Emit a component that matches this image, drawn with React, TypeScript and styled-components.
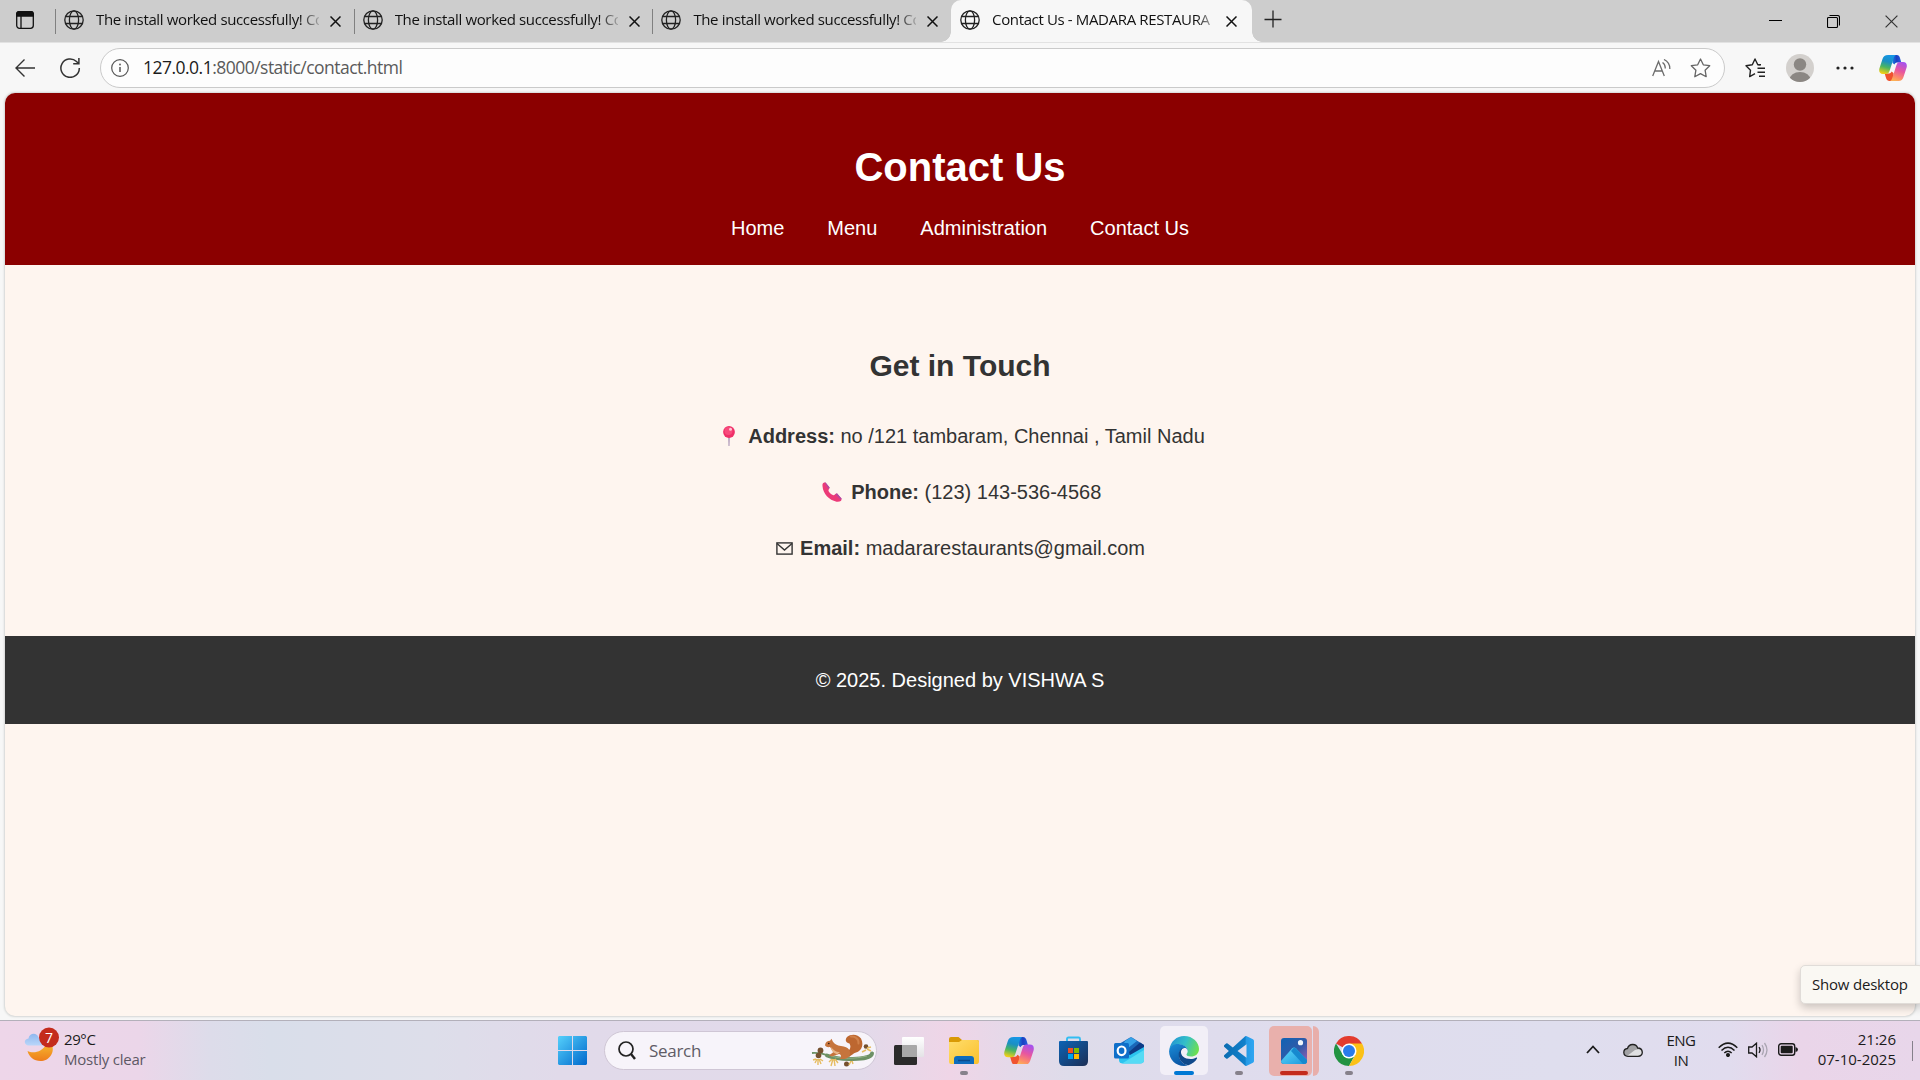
import React from 'react';
import styled, { createGlobalStyle } from 'styled-components';

const Global = createGlobalStyle`
  * { box-sizing: border-box; }
  html, body { margin: 0; padding: 0; overflow: hidden; }
  svg { display: block; flex: none; }
`;

const ui = `"Open Sans", "Noto Sans", sans-serif`;

const Screen = styled.div`
  width: 1920px;
  height: 1080px;
  display: flex;
  flex-direction: column;
  background: #f7f7f7;
  font-family: ${ui};
  color: #1b1b1b;
  overflow: hidden;
`;

/* Tab strip */
const TabStrip = styled.div`
  height: 42px;
  display: flex;
  background: #cdcdcd;
  flex: none;
`;
const Workspaces = styled.div`
  width: 55px;
  padding: 11px 0 0 16px;
`;
const Tab = styled.div<{ $active?: boolean }>`
  position: relative;
  width: ${p => (p.$active ? 301 : 298.7)}px;
  height: 42px;
  display: flex;
  align-items: center;
  padding: 0 12px 2px 9px;
  border-radius: ${p => (p.$active ? '10px 10px 0 0' : '0')};
  background: ${p => (p.$active ? '#f7f7f7' : 'transparent')};
  &::before, &::after {
    content: '';
    position: absolute;
    display: ${p => (p.$active ? 'block' : 'none')};
    bottom: 0;
    width: 10px;
    height: 10px;
  }
  &::before { left: -10px; background: radial-gradient(circle at 0 0, transparent 9.5px, #f7f7f7 10px); }
  &::after { right: -10px; background: radial-gradient(circle at 100% 0, transparent 9.5px, #f7f7f7 10px); }
`;
const PlainTab = styled(Tab)`
  &::before {
    display: block;
    left: 0;
    top: 9px;
    width: 1px;
    height: 25px;
    background: #808080;
  }
`;
const TabTitle = styled.div`
  margin: 0 0 2px 12px;
  width: 223px;
  height: 22px;
  line-height: 22px;
  font-size: 15px;
  letter-spacing: -0.36px;
  color: #111;
  white-space: nowrap;
  mask-image: linear-gradient(90deg, #000 204px, transparent 228px);
`;
const CloseSlot = styled.div`
  margin: 3px 0 0 11px;
`;
const NewTab = styled.div`
  padding: 10px 0 0 12px;
  flex: 1;
`;
const WindowControls = styled.div`
  display: flex;
  & > div {
    width: 58px;
    padding-top: 1px;
    display: flex;
    align-items: center;
    justify-content: center;
  }
`;

/* Toolbar */
const Toolbar = styled.div`
  height: 51px;
  flex: none;
  display: flex;
  align-items: center;
  padding: 0 13px 0 15px;
  border-top: 1px solid #e2e2e2;
`;
const RefreshSlot = styled.div`
  margin: 0 19px 0 25px;
`;
const AddressBar = styled.div`
  width: 1625px;
  height: 40px;
  border: 1px solid #cacaca;
  border-radius: 20px;
  background: #fdfdfd;
  display: flex;
  align-items: center;
  padding: 0 13px 0 10px;
`;
const Url = styled.div`
  flex: 1;
  margin: 0 0 2px 14px;
  font-size: 17.5px;
  letter-spacing: -0.52px;
  line-height: 24px;
  color: #5a5a5a;
  b { font-weight: 400; color: #1b1b1b; }
`;
const StarSlot = styled.div`
  margin-left: 19px;
`;
const ToolbarEnd = styled.div`
  flex: 1;
  display: flex;
  align-items: center;
  padding-left: 20px;
`;
const AvatarSlot = styled.div`
  margin: 0 22px 0 20px;
`;
const CopilotSlot = styled.div`
  margin-left: auto;
`;

/* Web page */
const PageFrame = styled.div`
  height: 923px;
  margin: 0 5px;
  flex: none;
  border-radius: 10px;
  background: #fef5ef;
  overflow: hidden;
  box-shadow: 0 0 2px 1px #d4d6d5;
  font-family: "Liberation Sans", Arial, sans-serif;
  font-size: 20px;
  line-height: 23px;
  text-align: center;
  color: #333;
`;
const Header = styled.header`
  height: 172px;
  padding-top: 51px;
  background: #8b0000;
  color: #fff;
`;
const Title = styled.h1`
  margin: 0 0 27px;
  font-size: 40px;
  line-height: 46px;
`;
const Nav = styled.nav`
  display: flex;
  justify-content: center;
  gap: 43px;
`;
const Main = styled.main`
  height: 371px;
  padding-top: 83px;
`;
const SubTitle = styled.h2`
  margin: 0 0 42px;
  font-size: 30px;
  line-height: 35px;
`;
const Line = styled.p`
  margin: 0 0 33px;
  display: flex;
  justify-content: center;
  white-space: pre;
`;
const Emoji = styled.span<{ $w: number; $up?: number }>`
  width: ${p => p.$w}px;
  margin-right: 5.5px;
  padding-bottom: ${p => p.$up || 0}px;
  display: flex;
  align-items: center;
  justify-content: center;
`;
const Footer = styled.footer`
  height: 88px;
  display: flex;
  align-items: center;
  justify-content: center;
  background: #333;
  color: #fff;
`;

/* Taskbar */
const Taskbar = styled.div`
  margin-top: 4px;
  height: 60px;
  flex: none;
  display: grid;
  grid-template-columns: 545px 832px 1fr;
  border-top: 1px solid #b3b0ba;
  background: linear-gradient(90deg, #eed6e9 0, #ebd6e9 140px, #dddcea 210px, #d9deea 270px, #dddeea 430px, #e1daea 560px, #e2daea 860px, #efd5e7 950px, #e5d9e9 1010px, #dedcea 1070px, #dfdced 1200px, #dfdeee 1560px, #e1dcee 1730px, #ead5e9 1800px, #e8d6ea 1920px);
`;
const Weather = styled.div`
  display: flex;
  padding: 6px 0 0 24px;
`;
const WeatherText = styled.div`
  margin-left: 4px;
  padding-top: 2px;
  font-size: 15px;
  line-height: 20px;
  letter-spacing: -0.4px;
  span { display: block; color: #5d5864; letter-spacing: -0.22px; }
`;
const Apps = styled.div`
  display: flex;
`;
const AppSlot = styled.div`
  position: relative;
  width: 55px;
  height: 59px;
  display: flex;
  align-items: center;
  justify-content: center;
`;
const AppTile = styled.div`
  width: 48px;
  height: 49px;
  border-radius: 5px;
  display: flex;
  align-items: center;
  justify-content: center;
  background: #f2eff7;
`;
const StackedTile = styled.div`
  width: 43px;
  height: 50px;
  padding-left: 12px;
  border-radius: 5px;
  display: flex;
  align-items: center;
  background: #e9b0ac;
`;
const StackEdge = styled.div`
  width: 6px;
  height: 50px;
  margin-left: 1px;
  border-radius: 0 6px 6px 0;
  background: #e8aeaa;
`;
const Indicator = styled.div<{ $w: number; $c: string }>`
  position: absolute;
  bottom: 5px;
  left: calc(50% - ${p => p.$w / 2}px);
  width: ${p => p.$w}px;
  height: 4px;
  border-radius: 2px;
  background: ${p => p.$c};
`;
const Search = styled.div`
  width: 273px;
  height: 39px;
  margin: 10px 4px 0;
  padding: 0 1px 0 13px;
  display: flex;
  align-items: center;
  border-radius: 20px;
  background: #f7f4fa;
  border: 1px solid #cfc6d5;
  font-size: 17px;
  color: #605c66;
  span { flex: 1; margin-left: 13px; letter-spacing: -0.3px; }
`;
const Tray = styled.div`
  display: flex;
  justify-content: flex-end;
  align-items: center;
  padding-right: 7px;
  font-size: 15px;
  line-height: 20px;
  letter-spacing: -0.5px;
`;
const TrayItem = styled.div<{ $w: number }>`
  width: ${p => p.$w}px;
  display: flex;
  justify-content: center;
  text-align: center;
  padding-bottom: 2px;
`;
const Clock = styled.div`
  width: 89px;
  text-align: right;
  padding-bottom: 3px;
  letter-spacing: 0;
`;
const DesktopSliver = styled.div`
  width: 1px;
  height: 20px;
  margin-left: 16px;
  background: #85808b;
`;
const Tooltip = styled.div`
  position: absolute;
  left: 1800px;
  top: 965px;
  width: 124px;
  height: 39px;
  padding-left: 11px;
  border: 1px solid #e0dcd8;
  border-radius: 5px;
  background: #faf8f3;
  box-shadow: 0 4px 8px rgba(0, 0, 0, 0.2);
  font-size: 15px;
  line-height: 37px;
  letter-spacing: -0.2px;
`;

const Globe = () => (
  <svg width="20" height="20" viewBox="0 0 20 20" fill="none" stroke="#222" strokeWidth="1.3">
    <circle cx="10" cy="10" r="9.2" />
    <ellipse cx="10" cy="10" rx="4.6" ry="9.2" />
    <path d="M1.6 6.5H18.4M1.6 13.5H18.4" />
  </svg>
);
const Cross = ({ s = 11, c = '#111', w = 1.5 }: { s?: number; c?: string; w?: number }) => (
  <svg width={s} height={s} viewBox="0 0 11 11" stroke={c} strokeWidth={w} fill="none">
    <path d="M.5 .5 10.5 10.5M10.5 .5 .5 10.5" />
  </svg>
);

const Copilot = ({ w = 28, id }: { w?: number; id: string }) => (
  <svg width={w} height={w * 0.93} viewBox="0 0 28 26">
    <defs>
      <linearGradient id={id + 'a'} x1=".6" y1="0" x2=".35" y2="1">
        <stop offset="0" stopColor="#1697e6" /><stop offset=".35" stopColor="#1a8fc4" />
        <stop offset=".65" stopColor="#49b562" /><stop offset="1" stopColor="#f4cf16" />
      </linearGradient>
      <linearGradient id={id + 'b'} x1=".7" y1="0" x2=".35" y2="1">
        <stop offset="0" stopColor="#a552ee" /><stop offset=".45" stopColor="#e8569f" />
        <stop offset=".8" stopColor="#fd8a6a" /><stop offset="1" stopColor="#fbb155" />
      </linearGradient>
      <linearGradient id={id + 'c'} x1="0" y1="0" x2="1" y2="0">
        <stop offset="0" stopColor="#1783e0" /><stop offset=".5" stopColor="#1b3fc2" /><stop offset="1" stopColor="#2760e0" />
      </linearGradient>
    </defs>
    <path d="M13 0H17.5C20 0 20.6 1.6 21.3 4L22.3 7.5H19C17 7.5 16 8 15.5 9.500L13.500 8Z" fill={`url(#${id}c)`} />
    <path d="M15 26H10.5C8 26 7.4 24.4 6.7 22L5.7 18.500H9C11 18.500 12 18 12.500 16.500L14.500 18Z" fill="#f0532f" />
    <path d="M9 0H17C15.6.6 15 2 14.4 4L10.700 15.500C9.900 18 9 19 6.800 19H4C.5 19-.3 16.500 .4 13.500L3.500 4C4.400 1.200 6 0 9 0Z" fill={`url(#${id}a)`} />
    <path d="M19 26H11C12.400 25.400 13 24 13.600 22L17.300 10.500C18.100 8 19 7 21.200 7H24C27.500 7 28.300 9.500 27.600 12.500L24.500 22C23.600 24.800 22 26 19 26Z" fill={`url(#${id}b)`} />
  </svg>
);

const Squirrel = () => (
  <svg width="64" height="34" viewBox="0 0 64 34">
    <path d="M16 21.500C24 24.500 32 25.500 42 25 52 24.500 60 24 61 19.500" fill="none" stroke="#6d9166" strokeWidth="4" strokeLinecap="round" />
    <path d="M1 19C9 18.500 14 20 20 23" fill="none" stroke="#6d9166" strokeWidth="1.800" />
    <path d="M20 22C30 25 44 25 56 22" fill="none" stroke="#93b186" strokeWidth="1" />
    <path d="M34 19C38 17 41 14 38.500 9.500 35 9 33.500 6 36 3 40-.5 47 0 50 4.500 53 10 51 17 45 18.500 42 19.500 41 21 38 23Z" fill="#bd6730" />
    <path d="M40 2.500C44 2 48 5 47.500 9.500" fill="none" stroke="#d0814a" strokeWidth="2" strokeLinecap="round" />
    <path d="M14 11C14.500 8 16.500 7 19 6.800L20.500 4.800 21.800 7.500C23.500 10 26 11.500 30 12 38 12.500 41 18 38 22.500 37 24 35 25 33 25H28C31 23.500 30.500 20.500 28 20L21 22.500 18 21.500 22.500 18C20.500 16.500 20.500 14.500 19 13 16.500 13.500 14 12.500 14 11Z" fill="#c6743c" />
    <path d="M20 13C23 17 26 18.500 29 18L26 20.500 22.500 18.500C20.500 17 20.500 15 20 13Z" fill="#e7b588" />
    <circle cx="17.800" cy="9.500" r=".8" fill="#2b1a12" />
    <g fill="#75502f"><circle cx="9.500" cy="16.500" r="2.900" /><circle cx="7.500" cy="21.500" r="2.800" /><circle cx="55" cy="12.500" r="2.300" /><circle cx="35.500" cy="30" r="2.500" /></g>
    <g stroke="#e6bc60" strokeWidth="1.400" fill="none">
      <path d="M5 25 2 26M6 25 4 29M7 25 7 31M8 25 10 30M9 25 12 27M21 25 18 28M22 25 20 32M23 25 24 32M24 25 27 29M40 27 38 31M41 27 42 30M55 16 51 18M56 15 60 17M56 14 60 13" />
    </g>
  </svg>
);

const tabs = [1, 2, 3];

export default function App() {
  return (
    <Screen>
      <Global />
      <TabStrip>
        <Workspaces>
          <svg width="18" height="18" viewBox="0 0 18 18" fill="none" stroke="#111" strokeWidth="1.300">
            <rect x=".7" y=".7" width="16.600" height="16.600" rx="2.800" />
            <path d="M1 1.500Q1.500.7 3 .7H15Q17 .7 17.300 2.500V5H.7V2.500Z" fill="#111" />
            <path d="M5 5V17" />
          </svg>
        </Workspaces>
        {tabs.map(t => (
          <PlainTab key={t}>
            <Globe />
            <TabTitle>The install worked successfully! Co</TabTitle>
            <CloseSlot><Cross /></CloseSlot>
          </PlainTab>
        ))}
        <Tab $active>
          <Globe />
          <TabTitle>Contact Us - MADARA RESTAURA</TabTitle>
          <CloseSlot><Cross /></CloseSlot>
        </Tab>
        <NewTab>
          <svg width="18" height="18" viewBox="0 0 18 18" stroke="#222" strokeWidth="1.300"><path d="M9 .5V17.500M.5 9.500H17.500" /></svg>
        </NewTab>
        <WindowControls>
          <div><svg width="13" height="13" viewBox="0 0 13 13"><path d="M0 5.500H13" stroke="#000" /></svg></div>
          <div>
            <svg width="13" height="13" viewBox="0 0 13 13" fill="none" stroke="#000" strokeWidth="1.100">
              <rect x=".5" y="2.500" width="10" height="10" rx="1" /><path d="M2.500.5H10.500Q12.500.5 12.500 2.500V10.500" />
            </svg>
          </div>
          <div><Cross s={13} c="#333" w={1} /></div>
        </WindowControls>
      </TabStrip>

      <Toolbar>
        <svg width="20" height="18" viewBox="0 0 20 18" fill="none" stroke="#333" strokeWidth="1.400"><path d="M20 9H1M9.500.5 1 9 9.500 17.500" /></svg>
        <RefreshSlot>
          <svg width="21" height="20" viewBox="0 0 21 20" fill="none" stroke="#333" strokeWidth="1.500"><path d="M19.300 10A9.200 9.200 0 1 1 16.500 3.500L18.500 5.500M18.900 0V5.800H13.200" /></svg>
        </RefreshSlot>
        <AddressBar>
          <svg width="18" height="18" viewBox="0 0 18 18" fill="none" stroke="#555" strokeWidth="1.200"><circle cx="9" cy="9" r="8.300" /><path d="M9 8V13" strokeWidth="1.500" /><circle cx="9" cy="5.500" r=".9" fill="#555" stroke="none" /></svg>
          <Url><b>127.0.0.1</b>:8000/static/contact.html</Url>
          <svg width="19" height="18" viewBox="0 0 19 18" fill="none" stroke="#6b6b6b" strokeWidth="1.300"><path d="M.7 17 6.500 2.500 12.300 17M2.800 12H10.200M10.500 3.500Q13.500 5.500 13.200 9.500M12 .5Q18 3.500 17.800 10" /></svg>
          <StarSlot>
            <svg width="21" height="20" viewBox="0 0 21 20" fill="none" stroke="#666" strokeWidth="1.300" strokeLinejoin="round"><path d="M10.500 1 13.300 6.800 19.700 7.700 15.100 12.200 16.200 18.700 10.500 15.600 4.800 18.700 5.900 12.200 1.300 7.700 7.700 6.800Z" /></svg>
          </StarSlot>
        </AddressBar>
        <ToolbarEnd>
          <svg width="21" height="20" viewBox="0 0 21 20" fill="none" stroke="#222" strokeWidth="1.400" strokeLinejoin="round"><path d="M10 15.700 4.700 18.600 5.500 12.200 1 7.700 7.300 6.700 10 1 12.800 6.700 15 7M12.500 10.200H20M12.500 14.200H20M14 18.200H20M13 6.700H16" /></svg>
          <AvatarSlot>
            <svg width="28" height="28" viewBox="0 0 28 28">
              <defs><clipPath id="av"><circle cx="14" cy="14" r="14" /></clipPath></defs>
              <g clipPath="url(#av)"><rect width="28" height="28" fill="#d3d0cd" /><circle cx="14" cy="10.500" r="6.200" fill="#8b8783" /><ellipse cx="14" cy="26" rx="10.500" ry="8" fill="#8b8783" /></g>
            </svg>
          </AvatarSlot>
          <svg width="18" height="4" viewBox="0 0 18 4" fill="#222"><circle cx="2" cy="2" r="1.600" /><circle cx="9" cy="2" r="1.600" /><circle cx="16" cy="2" r="1.600" /></svg>
          <CopilotSlot><Copilot id="ct" /></CopilotSlot>
        </ToolbarEnd>
      </Toolbar>

      <PageFrame>
        <Header>
          <Title>Contact Us</Title>
          <Nav><span>Home</span><span>Menu</span><span>Administration</span><span>Contact Us</span></Nav>
        </Header>
        <Main>
          <SubTitle>Get in Touch</SubTitle>
          <Line>
            <Emoji $w={27.5} $up={2}>
              <svg width="12" height="20" viewBox="0 0 12 20"><path d="M5.200 10H6.800L6.500 20H5.500Z" fill="#a892b5" /><circle cx="6" cy="6" r="5.900" fill="#ef2f68" /><circle cx="5.500" cy="5" r="4" fill="#f84a7c" /><circle cx="7.500" cy="3.200" r="1.500" fill="#ffc4d4" /></svg>
            </Emoji>
            <b>Address:</b> no /121 tambaram, Chennai , Tamil Nadu
          </Line>
          <Line>
            <Emoji $w={27} $up={2}>
              <svg width="20" height="20" viewBox="0 0 20 20">
                <path d="M.5 4C0 1 2 0 3.500.5L7.500 5.500C8 6.500 6 7.500 6.500 9 8 11.500 10 13 11.500 13.300 13 13 13.500 11 15 11.500L19.500 16.500C20 19 18 20 14.500 19.700 7 18 1 12 .5 4Z" fill="#ec3a78" />
                <path d="M2.500.3 3.800.7 7.700 5.500 6.500 7Z M13.500 12.200 15 11.300 19.700 16.700 18.500 17.500Z" fill="#b04ba5" />
              </svg>
            </Emoji>
            <b>Phone:</b> (123) 143-536-4568
          </Line>
          <Line>
            <Emoji $w={19.5}>
              <svg width="17" height="13" viewBox="0 0 17 13" fill="none" stroke="#333" strokeWidth="1.400"><rect x=".9" y=".9" width="15.200" height="11.200" /><path d="M1 1.500 8.500 8 16 1.500" /></svg>
            </Emoji>
            <b>Email:</b> madararestaurants@gmail.com
          </Line>
        </Main>
        <Footer>© 2025. Designed by VISHWA S</Footer>
      </PageFrame>

      <Taskbar>
        <Weather>
          <svg width="36" height="36" viewBox="0 0 36 36">
            <defs>
              <linearGradient id="moon" x1="0" y1="0" x2="0" y2="1"><stop offset="0" stopColor="#f6b62e" /><stop offset="1" stopColor="#ee7d1c" /></linearGradient>
              <linearGradient id="cld" x1="0" y1="0" x2="0" y2="1"><stop offset="0" stopColor="#8fb8ee" /><stop offset="1" stopColor="#b9d6fa" /></linearGradient>
            </defs>
            <path d="M3.500 24C9 27 19 25 22 17L28 18C31 26 25 34 16.500 34 10 34 5 30 3.500 24Z" fill="url(#moon)" />
            <path d="M5 18.500C-.5 18.500-.5 12 4.500 11.500 5 6 13 5 14.500 10.500L19 12V18.500Z" fill="url(#cld)" />
            <circle cx="25" cy="10.500" r="10" fill="#c42b1c" />
            <text x="25" y="15.500" fill="#fff" fontSize="14" textAnchor="middle">7</text>
          </svg>
          <WeatherText>29°C<span>Mostly clear</span></WeatherText>
        </Weather>
        <Apps>
          <AppSlot>
            <svg width="29" height="29" viewBox="0 0 29 29">
              <defs><linearGradient id="win" gradientUnits="userSpaceOnUse" x1="0" y1="0" x2="29" y2="29"><stop offset="0" stopColor="#55d0fb" /><stop offset="1" stopColor="#0068cc" /></linearGradient></defs>
              <path d="M1 0H14V14H0V1ZM15 0H28L29 1V14H15ZM0 15H14V29H1L0 28ZM15 15H29V28L28 29H15Z" fill="url(#win)" />
            </svg>
          </AppSlot>
          <Search>
            <svg width="18" height="19" viewBox="0 0 18 19" fill="none" stroke="#222"><circle cx="8" cy="8" r="7" strokeWidth="1.700" /><path d="M13 13 17 18" strokeWidth="2.400" /></svg>
            <span>Search</span>
            <Squirrel />
          </Search>
          <AppSlot>
            <svg width="30" height="28" viewBox="0 0 30 28">
              <defs><linearGradient id="tv" x1="0" y1="0" x2="0" y2="1"><stop offset="0" stopColor="#fff" /><stop offset="1" stopColor="#e4e3e6" /></linearGradient></defs>
              <rect x="0" y="8" width="23" height="20" rx="1.500" fill="#2b2b2b" /><rect x="8" y="0" width="22" height="20" rx="1" fill="url(#tv)" /><path d="M8 8H22Q23 8 23 9V20H9Q8 20 8 19Z" fill="#a8a8a8" />
            </svg>
          </AppSlot>
          <AppSlot>
            <svg width="30" height="27" viewBox="0 0 30 27">
              <defs><linearGradient id="fo" x1="0" y1="0" x2="1" y2="1"><stop offset="0" stopColor="#ffdd6c" /><stop offset="1" stopColor="#fac02c" /></linearGradient></defs>
              <path d="M0 2Q0 0 2 0H9.500L13 3H28Q30 3 30 5V12H0Z" fill="#d99a06" /><path d="M0 5H10L13 3H28Q30 3 30 5V24Q30 27 28 27H2Q0 27 0 25Z" fill="url(#fo)" />
              <path d="M5 27V22Q5 19 8 19H22Q25 19 25 22V27Z" fill="#0f6cbd" /><path d="M9 23.500H21" stroke="#0a4b8c" strokeWidth="1.500" />
            </svg>
            <Indicator $w={8} $c="#86818b" />
          </AppSlot>
          <AppSlot><Copilot w={30} id="cb" /></AppSlot>
          <AppSlot>
            <svg width="29" height="30" viewBox="0 0 29 30">
              <defs><linearGradient id="st" x1="0" y1="0" x2="1" y2="1"><stop offset="0" stopColor="#0c63b5" /><stop offset="1" stopColor="#1d2f55" /></linearGradient></defs>
              <path d="M8 6V3Q8 1.500 9.500 1.500H19.500Q21 1.500 21 3V6" fill="none" stroke="#33bdf2" strokeWidth="1.900" />
              <path d="M1 5H28Q29 5 29 6V25Q29 30 24 30H5Q0 30 0 25V6Q0 5 1 5Z" fill="url(#st)" />
              <path d="M9 12H14V17H9Z" fill="#f25022" /><path d="M15 12H20V17H15Z" fill="#7fba00" /><path d="M9 18H14V23H9Z" fill="#00a4ef" /><path d="M15 18H20V23H15Z" fill="#ffb900" />
            </svg>
          </AppSlot>
          <AppSlot>
            <svg width="30" height="27" viewBox="0 0 30 27">
              <path d="M5 7 16 .6Q17 0 18 .6L30 8V22L5 20Z" fill="#1a67b8" /><path d="M11 4 17 .3 23 4 14 11 9 8Z" fill="#36a2e8" />
              <path d="M15 15 26 5.500 30 8V12L17 20Z" fill="#0e3b86" />
              <path d="M5 18H16L30 10V23Q30 26.500 26 26.500H9Q5 26.500 5 23Z" fill="#2cc4ef" /><path d="M8 26.500 30 13V23Q30 26.500 26 26.500Z" fill="#56dbf5" />
              <rect y="6" width="15" height="15.500" rx="1.500" fill="#0f6fc9" /><ellipse cx="7.600" cy="13.800" rx="3.900" ry="4.300" fill="none" stroke="#fff" strokeWidth="2.200" />
            </svg>
          </AppSlot>
          <AppSlot>
            <AppTile>
              <svg width="30" height="30" viewBox="0 0 30 30">
                <defs>
                  <linearGradient id="e1" x1="0" y1=".3" x2="1" y2=".6"><stop offset="0" stopColor="#2393d2" /><stop offset=".5" stopColor="#33bfc9" /><stop offset="1" stopColor="#6ee04e" /></linearGradient>
                  <linearGradient id="e2" x1="0" y1="0" x2=".4" y2="1"><stop offset="0" stopColor="#1b8dd8" /><stop offset="1" stopColor="#0b57a5" /></linearGradient>
                </defs>
                <path d="M.3 14C1.500 5 8 0 15 0 24 0 30 6.500 30 13 30 18 26 20.500 22 20.500 19 20.500 17.500 19.500 17.500 18.500 17.500 17.700 18.700 17 18.700 15 18.700 11 14 8.500 9.500 8.500 5 8.500 1.500 11 .3 14Z" fill="url(#e1)" />
                <path d="M.1 15C.8 10 5 7.700 9.500 8 14 8.300 18.700 11 18.700 15 18 12.500 17 12 15.500 12 12.500 12 10 15 10 19 10 24 14 28.500 19 29.300 17.500 29.800 16.500 30 15 30 6.500 30-.2 23 .1 15Z" fill="url(#e2)" />
                <path d="M15.500 11.700C12 11.500 9.700 15 9.700 18.500 9.700 24 14 28.800 19.500 29.200 23 28 26.500 25.500 28 22.500 28.300 21.800 27.500 21.300 26.900 21.700 25.500 22.500 23.500 23 21.500 23 15.500 23 11.500 19.500 12 15.500 12.300 13.500 13.500 12.200 15.500 11.700Z" fill="#114a8b" />
              </svg>
            </AppTile>
            <Indicator $w={20} $c="#0078d4" />
          </AppSlot>
          <AppSlot>
            <svg width="30" height="30" viewBox="0 0 24 24">
              <defs><linearGradient id="vs" x1="0" y1="0" x2="1" y2="0"><stop offset="0" stopColor="#0b6db2" /><stop offset=".7" stopColor="#1180cb" /><stop offset=".75" stopColor="#259ae6" /><stop offset="1" stopColor="#2fa6f2" /></linearGradient></defs>
              <path fill="url(#vs)" d="M23.150 2.587L18.210.21a1.494 1.494 0 0 0-1.705.29l-9.460 8.630-4.120-3.128a.999.999 0 0 0-1.276.057L.327 7.261A1 1 0 0 0 .326 8.740L3.899 12 .326 15.260a1 1 0 0 0 .001 1.479L1.650 17.940a.999.999 0 0 0 1.276.057l4.120-3.128 9.460 8.630a1.492 1.492 0 0 0 1.704.290l4.942-2.377A1.500 1.500 0 0 0 24 20.060V3.939a1.500 1.500 0 0 0-.850-1.352zm-5.146 14.861L10.826 12l7.178-5.448v10.896z" />
            </svg>
            <Indicator $w={8} $c="#86818b" />
          </AppSlot>
          <AppSlot>
            <StackedTile>
              <svg width="26" height="26" viewBox="0 0 26 26">
                <defs>
                  <linearGradient id="ph" x1="0" y1="0" x2="1" y2="1"><stop offset="0" stopColor="#0e63b4" /><stop offset=".55" stopColor="#335aa8" /><stop offset="1" stopColor="#a15fb5" /></linearGradient>
                  <linearGradient id="pm" x1="0" y1="0" x2="1" y2="1"><stop offset="0" stopColor="#61dcfb" /><stop offset="1" stopColor="#1b96dc" /></linearGradient>
                  <clipPath id="pc"><rect width="26" height="26" rx="3" /></clipPath>
                </defs>
                <g clipPath="url(#pc)"><rect width="26" height="26" fill="url(#ph)" /><path d="M0 23 11 10.500Q13 8.500 15 10.500L26 22V26H0Z" fill="url(#pm)" /><path d="M13 9.500Q14 9.500 15 10.500L26 22V26H22L10 13Z" fill="#1689cf" /><circle cx="19.500" cy="4.700" r="2.600" fill="#f0f5fb" /></g>
              </svg>
            </StackedTile>
            <StackEdge />
            <Indicator $w={28} $c="#c42b1c" />
          </AppSlot>
          <AppSlot>
            <svg width="30" height="30" viewBox="0 0 30 30">
              <path d="M15 15 2 7.500A15 15 0 0 1 28 7.500Z" fill="#e33b2e" /><path d="M2 7.500A15 15 0 0 0 15 30L21.200 18.600 15 15 8.800 18.600Z" fill="#229342" /><path d="M15 30A15 15 0 0 0 28 7.500H15L21.500 18.700Z" fill="#fbc116" />
              <circle cx="15" cy="15" r="7.500" fill="#fff" /><circle cx="15" cy="15" r="6" fill="#2a7bea" />
            </svg>
            <Indicator $w={8} $c="#86818b" />
          </AppSlot>
        </Apps>
        <Tray>
          <TrayItem $w={40}><svg width="14" height="9" viewBox="0 0 14 9" fill="none" stroke="#1b1b1b" strokeWidth="1.800"><path d="M1 8 7 1.500 13 8" /></svg></TrayItem>
          <TrayItem $w={40}>
            <svg width="20" height="14" viewBox="0 0 20 14"><path d="M5 13.300C-.5 13.300-.5 6 4.500 5.500 6 .5 13 0 14.700 5 20.500 5 21 13.300 15 13.300Z" fill="#a2a2a5" /><path d="M4 13 12 7Q18 4.500 19 9.500 18 13.300 15 13.300Z" fill="#e0e0e2" /><path d="M5 13.300C-.5 13.300-.5 6 4.500 5.500 6 .5 13 0 14.700 5 20.500 5 21 13.300 15 13.300Z" fill="none" stroke="#222" strokeWidth="1.300" /></svg>
          </TrayItem>
          <TrayItem $w={56}>ENG<br />IN</TrayItem>
          <TrayItem $w={38}>
            <svg width="20" height="15" viewBox="0 0 20 15" fill="none" stroke="#1b1b1b" strokeWidth="1.500"><path d="M.7 5.700Q10-3.500 19.300 5.700M3.500 8.500Q10 2 16.500 8.500M6.300 11Q10 7.500 13.700 11" /><circle cx="10" cy="13" r="1.300" fill="#1b1b1b" /></svg>
          </TrayItem>
          <TrayItem $w={22}>
            <svg width="20" height="16" viewBox="0 0 20 16" fill="none" stroke="#1b1b1b" strokeWidth="1.300"><path d="M.7 5H4L8.500 1.200V14.800L4 11H.7ZM11 5.200Q13 8 11 10.800" /><path d="M14 3.200Q17 8 14 12.800M16.500 1Q21.500 8 16.500 15" stroke="#aaa5b2" /></svg>
          </TrayItem>
          <TrayItem $w={38}>
            <svg width="20" height="13" viewBox="0 0 20 13"><rect x=".7" y=".7" width="16" height="11.600" rx="2.500" fill="none" stroke="#1b1b1b" strokeWidth="1.400" /><rect x="2.700" y="2.700" width="12" height="7.600" rx="1" fill="#1b1b1b" /><path d="M17.500 4Q20 4.500 20 6.500 20 8.500 17.500 9Z" fill="#1b1b1b" /></svg>
          </TrayItem>
          <Clock>21:26<br />07-10-2025</Clock>
          <DesktopSliver />
        </Tray>
      </Taskbar>
      <Tooltip>Show desktop</Tooltip>
    </Screen>
  );
}
